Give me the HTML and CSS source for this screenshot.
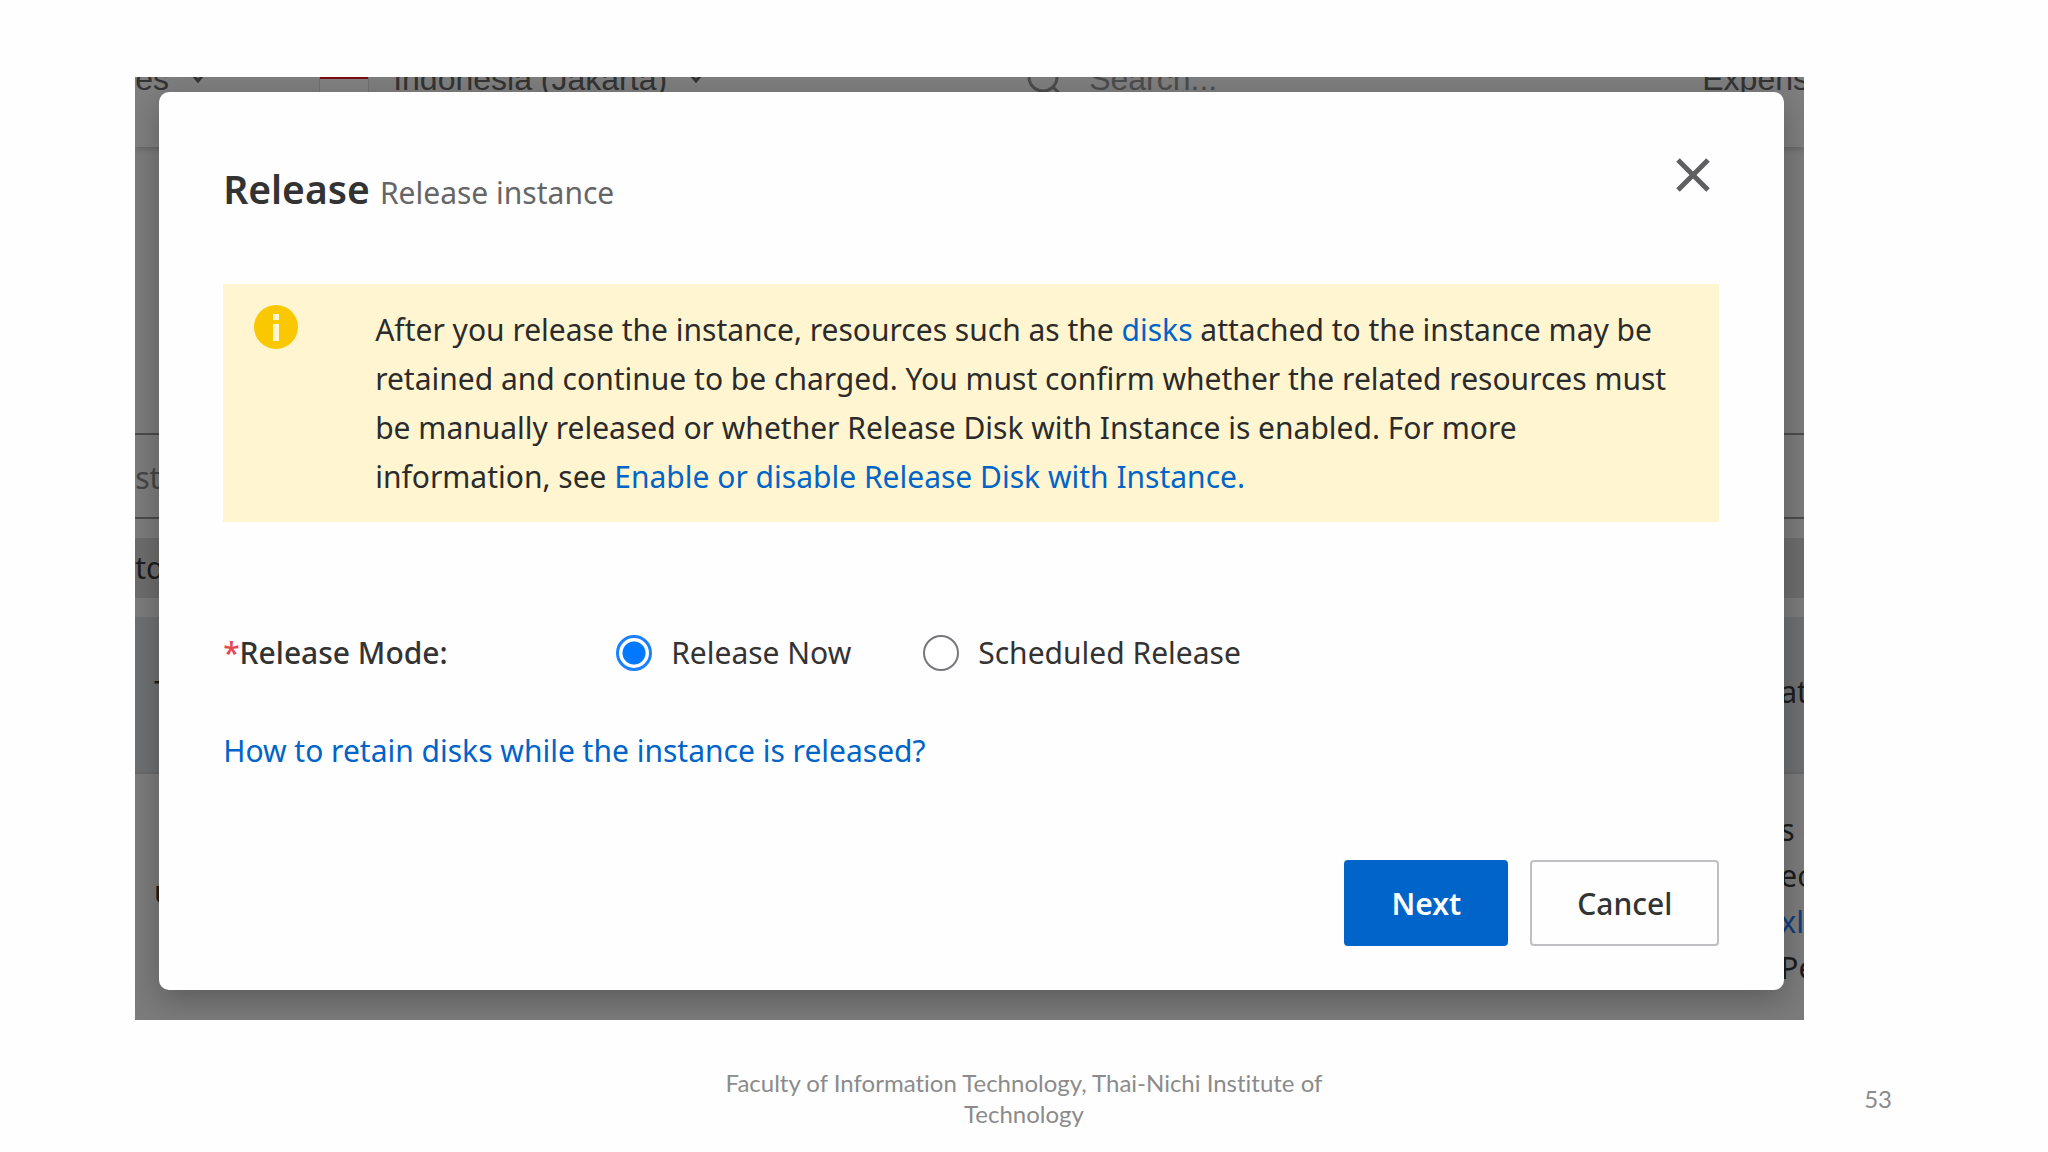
FILE: index.html
```
<!DOCTYPE html>
<html lang="en">
<head>
  <meta charset="UTF-8" />
  <meta name="viewport" content="width=device-width, initial-scale=1.0" />
  <title>Release instance</title>
  <link rel="stylesheet" href="styles.css">
</head>
<body>
  <div class="slide">
    <div class="stage">
      <!-- dimmed console page behind the dialog -->
      <div class="console">
        <div class="topbar">
          <div class="topbar-item">es
            <svg class="caret" viewBox="0 0 14 10"><path d="M2 1l5 6 5-6" /></svg>
          </div>
          <div class="topbar-item region">
            <span class="flag"></span>
            Indonesia (Jakarta)
            <svg class="caret" viewBox="0 0 14 10"><path d="M2 1l5 6 5-6" /></svg>
          </div>
          <div class="topbar-item search">
            <svg class="search-icon" viewBox="0 0 34 34"><circle cx="16" cy="15" r="14" /><path d="M26 25l7 7" /></svg>
            Search...
          </div>
          <div class="topbar-item">Expens</div>
        </div>
        <div class="row filter"><span>st</span></div>
        <div class="row tags"><span>tdo</span></div>
        <div class="row table-head"><span class="inset">T</span><span class="edge">at</span></div>
        <div class="row table-body">
          <span class="inset strong">u</span>
          <span class="edge">s c<br>ec<br><span class="blue">xl</span><br>Pe</span>
        </div>
      </div>

      <div class="modal" role="dialog" aria-labelledby="dialogTitle">
        <div class="modal-header">
          <h2 id="dialogTitle">Release <small>Release instance</small></h2>
          <button type="button" class="close" aria-label="Close">
            <svg viewBox="0 0 36 36"><path d="M3 3l30 30M33 3L3 33" /></svg>
          </button>
        </div>

        <div class="notice">
          <svg class="info-icon" viewBox="0 0 44 44">
            <circle cx="22" cy="22" r="22" />
            <path d="M19 9h6v6h-6zM19 19h6v17h-6z" />
          </svg>
          <p>After you release the instance, resources such as the <a href="#">disks</a> attached to the instance may be retained and continue to be charged. You must confirm whether the related resources must be manually released or whether Release Disk with Instance is enabled. For more information, see <a href="#">Enable or disable Release Disk with Instance.</a></p>
        </div>

        <form>
          <div class="field" role="radiogroup" aria-labelledby="modeLabel">
            <span class="field-label" id="modeLabel"><span class="required">*</span>Release Mode:</span>
            <label class="option" for="now"><input type="radio" id="now" name="mode" checked>Release Now</label>
            <label class="option" for="scheduled"><input type="radio" id="scheduled" name="mode">Scheduled Release</label>
          </div>
          <a class="help" href="#">How to retain disks while the instance is released?</a>
          <div class="actions">
            <button type="button" class="btn primary">Next</button>
            <button type="button" class="btn">Cancel</button>
          </div>
        </form>
      </div>
    </div>

    <footer class="footer">
      <p>Faculty of Information Technology, Thai-Nichi Institute of Technology</p>
      <span class="page-number">53</span>
    </footer>
  </div>
</body>
</html>
```
FILE: styles.css
```
* {
  box-sizing: border-box;
}
body {
  margin: 0;
  background-color: #fefefe;
  font-family: "Noto Sans", "Open Sans", sans-serif;
  font-size: 30px;
  color: #333;
}
.slide {
  padding-top: 77px;
}
a {
  color: #0064c8;
  text-decoration: none;
}

/* console and dialog share one grid cell */
.stage {
  display: grid;
  width: 81.5%;
  margin-left: 6.6%;
  overflow: hidden;
  background-color: #7b7b7b;
}
.console,
.modal {
  grid-area: 1 / 1;
  min-width: 0;
}
.console {
  display: flex;
  flex-direction: column;
  line-height: 46px;
  color: #1c1c1c;
}
.topbar {
  display: grid;
  grid-template-columns: 184px 708px 1fr 102px;
  height: 84px;
  margin-top: -14px;
  margin-bottom: 286px;
  background-color: #7e7e7e;
  box-shadow: 0 2px 6px rgba(0, 0, 0, 0.2);
  font-family: "Liberation Sans", Arial, sans-serif;
  font-size: 32px;
  line-height: 32px;
  color: #333;
}
.topbar-item {
  display: flex;
  align-items: center;
  height: 32px;
  white-space: nowrap;
}
.caret {
  width: 14px;
  height: 10px;
  margin-left: 22px;
  fill: none;
  stroke: #333;
  stroke-width: 3;
}
.flag {
  width: 50px;
  height: 32px;
  margin-right: 24px;
  border: 1px solid #707070;
  background: linear-gradient(#7a0c14 50%, #828282 50%);
}
.search {
  color: #4c4c4c;
}
.search-icon {
  width: 34px;
  height: 34px;
  margin-right: 28px;
  fill: none;
  stroke: #4c4c4c;
  stroke-width: 3;
}
.row {
  display: flex;
  justify-content: space-between;
  white-space: nowrap;
}
.filter {
  height: 86px;
  padding-top: 20px;
  border-top: 2px solid #4b4b4b;
  border-bottom: 2px solid #4b4b4b;
  color: #444;
}
.tags {
  height: 60px;
  margin: 19px 0;
  padding-top: 7px;
  background-color: #6c6c6c;
}
.table-head {
  height: 157px;
  padding-top: 52px;
  border-bottom: 2px solid #686868;
  background-color: #6e6f70;
}
.table-body {
  padding-top: 33px;
}
.inset {
  padding-left: 19px;
}
.strong {
  padding-top: 62px;
  font-weight: bold;
}
.edge {
  width: 24px;
}
.blue {
  color: #0f3d78;
}

.modal {
  margin: 15px 20px 30px 24px;
  padding: 65px 65px 44px 64px;
  border-radius: 10px;
  background-color: #fefefe;
  box-shadow: 0 10px 30px rgba(0, 0, 0, 0.25);
}
.modal-header {
  display: flex;
  justify-content: space-between;
  align-items: flex-start;
  height: 127px;
}
h2 {
  margin: 5px 0 0;
  font-size: 39px;
  line-height: 54px;
  font-weight: 600;
}
h2 small {
  font-size: 30px;
  font-weight: 400;
  color: #666;
}
.close {
  width: 36px;
  height: 36px;
  margin-right: 8px;
  padding: 0;
  border: 0;
  background: none;
}
.close svg {
  display: block;
  stroke: #5f5f62;
  stroke-width: 5;
}
.notice {
  display: flex;
  align-items: flex-start;
  gap: 77px;
  padding: 21px 38px 21px 31px;
  background-color: #fff6d1;
  color: #2b2b2b;
}
.info-icon {
  flex: none;
  width: 44px;
  height: 44px;
}
.info-icon circle {
  fill: #f9c800;
}
.info-icon path {
  fill: #fff6d1;
}
.notice p {
  margin: 0;
  line-height: 49px;
}
.field {
  display: flex;
  align-items: center;
  margin-top: 110px;
  line-height: 42px;
}
.field-label {
  width: 393px;
  font-weight: 500;
}
.required {
  color: #e5484d;
}
.option {
  display: flex;
  align-items: center;
  gap: 19px;
  margin-right: 72px;
}
input[type="radio"] {
  appearance: none;
  width: 36px;
  height: 36px;
  margin: 0;
  border: 2px solid #77777c;
  border-radius: 50%;
  background-color: #fff;
}
input[type="radio"]:checked {
  border: 3px solid #1a80ff;
  background: radial-gradient(circle, #0078ff 11px, #fff 12px);
}
.help {
  display: block;
  margin-top: 56px;
  line-height: 42px;
}
.actions {
  display: flex;
  justify-content: flex-end;
  gap: 22px;
  margin-top: 88px;
}
.btn {
  height: 86px;
  padding: 0 45px;
  border: 2px solid #c0c0c4;
  border-radius: 4px;
  background-color: #fefefe;
  font: 500 30px "Noto Sans", "Open Sans", sans-serif;
  color: #333;
}
.btn.primary {
  border-color: #0064c8;
  background-color: #0064c8;
  font-weight: 600;
  color: #fff;
}

.footer {
  display: grid;
  grid-template-columns: 1fr 640px 1fr;
  align-items: center;
  padding: 47px 156px 0;
  font-family: Lato, sans-serif;
  font-size: 24px;
  line-height: 31px;
  font-variant-ligatures: none;
  color: #8b8b8b;
}
.footer p {
  grid-column: 2;
  margin: 0;
  text-align: center;
}
.page-number {
  text-align: right;
}
```
